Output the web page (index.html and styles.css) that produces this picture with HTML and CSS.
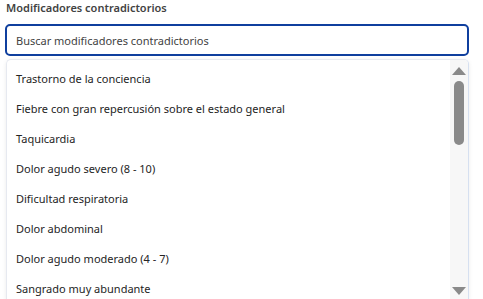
FILE: index.html
```html
<!DOCTYPE html>
<html lang="es">
<head>
    <meta charset="UTF-8">
    <meta name="viewport" content="width=device-width, initial-scale=1.0">
    <title>Modificadores contradictorios</title>
    <link rel="stylesheet" href="styles.css">
</head>
<body>
    <div class="field">
        <label class="label">Modificadores contradictorios</label>
        <div class="control">
            <input class="input" type="text" placeholder="Buscar modificadores contradictorios" autofocus>
        </div>
        <div class="dropdown">
            <ul class="options">
                <li class="option">Trastorno de la conciencia</li>
                <li class="option">Fiebre con gran repercusión sobre el estado general</li>
                <li class="option">Taquicardia</li>
                <li class="option">Dolor agudo severo (8 - 10)</li>
                <li class="option">Dificultad respiratoria</li>
                <li class="option">Dolor abdominal</li>
                <li class="option">Dolor agudo moderado (4 - 7)</li>
                <li class="option">Sangrado muy abundante</li>
            </ul>
            <div class="scrollbar">
                <span class="arrow arrow-up"></span>
                <div class="track">
                    <div class="thumb"></div>
                </div>
                <span class="arrow arrow-down"></span>
            </div>
        </div>
    </div>
</body>
</html>
```

FILE: styles.css
```css
* {
    margin: 0;
    padding: 0;
    box-sizing: border-box;
}
body {
    font-family: "Noto Sans", "Open Sans", sans-serif;
    background-color: #ffffff;
    font-size: 11px;
    color: #242424;
    overflow: hidden;
}

.field {
    padding: 0 14px 0 5px;
}

.label {
    display: block;
    font-weight: 600;
    font-size: 11px;
    line-height: 16px;
    color: #424242;
    padding-left: 1px;
    height: 24px;
}

.input {
    width: 100%;
    height: 32px;
    padding: 0 9px;
    border: 2px solid #0f3f9e;
    border-radius: 5px;
    font-family: inherit;
    font-size: 11px;
    color: #242424;
    outline: none;
    caret-color: #242424;
}
.input::placeholder {
    color: #424242;
}

.dropdown {
    display: flex;
    margin: 3px 0 0 1px;
    height: 241px;
    border: 1px solid #e6e9f0;
    border-right-color: #d6e0f0;
    border-bottom: none;
    border-radius: 5px 5px 0 0;
    box-shadow: 0 1px 4px rgba(0, 0, 0, 0.08);
    overflow: hidden;
}

.options {
    flex: 1;
    list-style: none;
    padding-top: 4px;
}
.option {
    height: 30px;
    line-height: 30px;
    padding-left: 9px;
    white-space: nowrap;
}

.scrollbar {
    width: 18px;
    background-color: #f7f7f7;
    display: flex;
    flex-direction: column;
    align-items: center;
    padding: 7px 0 5px;
}
.arrow {
    width: 0;
    height: 0;
    border-left: 7px solid transparent;
    border-right: 7px solid transparent;
}
.arrow-up {
    border-bottom: 8px solid #8a8a8a;
}
.arrow-down {
    border-top: 8px solid #8a8a8a;
}
.track {
    flex: 1;
    width: 100%;
    display: flex;
    justify-content: center;
    padding-top: 6px;
}
.thumb {
    width: 10px;
    height: 64px;
    border-radius: 5px;
    background-color: #8a8a8a;
}
```
